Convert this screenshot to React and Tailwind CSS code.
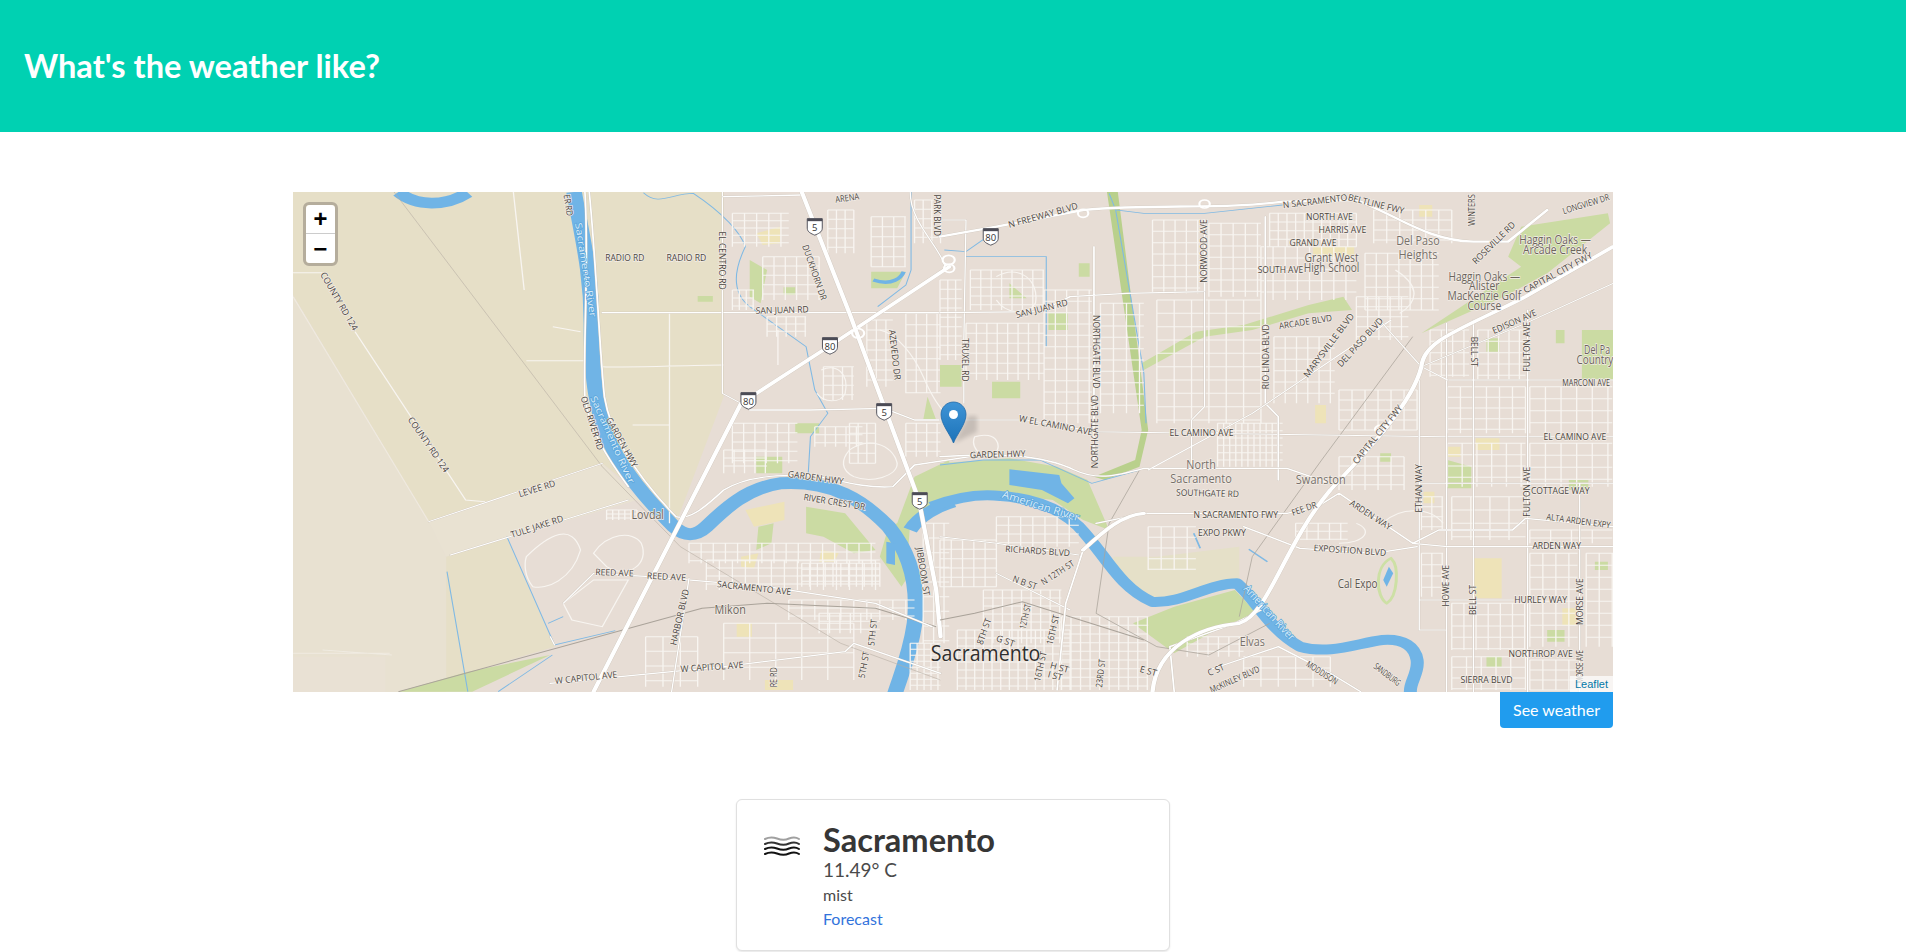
import React from 'react';

const LAND = '#e7ddd5';
const RURAL = '#e6dfc7';
const PALE = '#e8e1d1';
const WATER = '#70b4e6';
const PARK = '#cbdba3';
const SAND = '#eee3b8';

// the map sketch is written in crop units, these bring it to map pixels
const SX = 0.4337;
const SY = 1 / 3;
const LEFT_X = -3;
const RIGHT_X = 647;
const TOP_Y = -2;

// street blocks: x, y, w, h, dx, dy
const streetGrid = ([x, y, w, h, dx, dy]) => {
    let d = '';
    for (let i = x; i <= x + w; i += dx) d += `M${i} ${y}V${y + h}`;
    for (let j = y; j <= y + h; j += dy) d += `M${x} ${j}H${x + w}`;
    return d;
};

const gridsLeft = [
    [1020, 70, 130, 100, 28, 22], [1090, 200, 130, 130, 26, 28], [1020, 300, 50, 60, 16, 24],
    [1240, 60, 60, 130, 20, 28], [1340, 80, 80, 150, 26, 30], [1440, 30, 60, 130, 20, 28],
    [1330, 390, 60, 200, 22, 30], [1420, 370, 80, 240, 24, 34], [1100, 380, 90, 60, 22, 22],
    [1020, 700, 150, 120, 26, 28], [1210, 710, 110, 60, 24, 24], [1000, 780, 100, 70, 24, 24],
    [920, 1060, 430, 60, 28, 26], [960, 1110, 400, 90, 30, 24], [1180, 1120, 180, 70, 18, 18],
    [1150, 1230, 290, 60, 30, 24], [1000, 1300, 300, 170, 60, 44], [1220, 1270, 140, 60, 24, 24],
    [1460, 1000, 60, 360, 24, 44], [1230, 530, 70, 100, 22, 28], [1420, 700, 80, 100, 24, 28],
    [1290, 700, 60, 120, 20, 30], [730, 960, 70, 30, 14, 12], [820, 1340, 120, 150, 40, 44],
    [1430, 1360, 70, 140, 16, 18],
];

const gridsRight = [
    [0, 270, 50, 240, 18, 28], [70, 240, 170, 120, 24, 26], [60, 400, 180, 170, 24, 30],
    [240, 300, 110, 400, 26, 34], [370, 340, 100, 330, 30, 34], [490, 90, 110, 220, 26, 34],
    [620, 100, 120, 220, 28, 34], [760, 70, 200, 100, 20, 26], [740, 170, 220, 160, 28, 34],
    [500, 330, 240, 370, 40, 40], [770, 440, 140, 200, 26, 34], [640, 700, 150, 130, 14, 22],
    [1000, 60, 180, 100, 30, 30], [980, 190, 170, 170, 26, 34], [960, 320, 120, 130, 26, 30],
    [1130, 420, 90, 140, 26, 34], [1240, 420, 110, 150, 24, 34], [1170, 590, 180, 140, 30, 32],
    [1360, 590, 190, 140, 36, 36], [1170, 760, 180, 130, 34, 34], [1360, 760, 190, 130, 36, 36],
    [1110, 920, 50, 100, 24, 30], [1180, 920, 170, 130, 44, 40], [1360, 1020, 190, 40, 48, 24],
    [1110, 1090, 50, 130, 24, 34], [1180, 1240, 170, 140, 28, 34], [1360, 1090, 110, 280, 30, 36],
    [1490, 1090, 70, 280, 30, 36], [1180, 1400, 170, 100, 34, 32], [1360, 1410, 110, 90, 30, 30],
    [0, 1050, 130, 140, 26, 28], [130, 980, 190, 90, 28, 26], [100, 1200, 180, 160, 22, 24],
    [40, 1320, 260, 180, 20, 24], [280, 1280, 200, 220, 22, 26], [480, 1010, 110, 130, 30, 32],
    [820, 1000, 120, 50, 26, 24], [920, 800, 150, 100, 30, 28], [920, 600, 180, 120, 30, 30],
    [570, 1340, 130, 60, 24, 22], [700, 1400, 200, 90, 40, 34],
];

const shields = [
    [LEFT_X, 1210, 110, '5'], [LEFT_X, 1370, 665, '5'], [LEFT_X, 1452, 932, '5'],
    [LEFT_X, 1245, 467, '80'], [LEFT_X, 1057, 632, '80'], [RIGHT_X, 117, 140, '80'],
];

// text, x, y, rotation, width, [size, color]
const labelsLeft = [
    ['COUNTY RD 124', 112, 335, 66, 186], ['COUNTY RD 124', 318, 765, 62, 181],
    ['RADIO RD', 772, 207, 0, 90], ['RADIO RD', 914, 207, 0, 92],
    ['EL CENTRO RD', 995, 212, 90, 175], ['DUCKHORN DR', 1208, 248, 75, 170],
    ['PARK BLVD', 1490, 76, 90, 125], ['SAN JUAN RD', 1135, 362, -2, 122],
    ['AZEVEDO DR', 1393, 495, 85, 150], ['OLD RIVER RD', 695, 700, 76, 165],
    ['GARDEN HWY', 764, 758, 67, 158], ['LEVEE RD', 570, 898, -22, 90],
    ['TULE JAKE RD', 570, 1012, -23, 130], ['GARDEN HWY', 1212, 865, 10, 130],
    ['RIVER CREST DR', 1255, 938, 12, 145], ['JIBBOOM ST', 1458, 1145, 83, 145],
    ['REED AVE', 748, 1150, 3, 88], ['REED AVE', 868, 1162, 4, 90],
    ['SACRAMENTO AVE', 1070, 1196, 8, 172], ['HARBOR BLVD', 900, 1282, -80, 170],
    ['5TH ST', 1345, 1328, -85, 80], ['5TH ST', 1325, 1425, -82, 80],
    ['W CAPITOL AVE', 683, 1465, -8, 145], ['W CAPITOL AVE', 973, 1433, -5, 145],
    ['RE RD', 1118, 1462, -90, 60], ['ARENA', 1285, 26, -10, 55], ['ER RD', 640, 46, 83, 65],
    ['Lovdal', 825, 978, 0, 75, 29, '#6b645c'], ['Mikon', 1015, 1263, 0, 72, 29, '#6b645c'],
    ['Sacramento River', 680, 240, 83, 285, 21, '#d8ebf8'], ['Sacramento River', 742, 750, 71, 275, 21, '#d8ebf8'],
];

const labelsRight = [
    ['N FREEWAY BLVD', 238, 78, -20, 170], ['N SACRAMENTO', 865, 36, -9, 150], ['BELTLINE FWY', 1005, 44, 18, 135],
    ['NORTH AVE', 898, 82, 0, 108], ['HARRIS AVE', 928, 123, 0, 110], ['GRAND AVE', 860, 162, 0, 108],
    ['SOUTH AVE', 785, 243, 0, 105], ['NORWOOD AVE', 610, 183, -90, 190], ['WINTERS', 1227, 60, -90, 95],
    ['ROSEVILLE RD', 1278, 160, -52, 150], ['LONGVIEW DR', 1490, 44, -22, 115],
    ['CAPITAL CITY FWY', 1425, 250, -35, 190], ['EDISON AVE', 1325, 397, -30, 115],
    ['FULTON AVE', 1355, 470, -90, 150], ['BELL ST', 1230, 485, 90, 90], ['MARCONI AVE', 1490, 580, 0, 110],
    ['SAN JUAN RD', 235, 358, -18, 125], ['NORTHGATE BLVD', 358, 485, 90, 220], ['NORTHGATE BLVD', 358, 725, -90, 220],
    ['TRUXEL RD', 57, 510, 90, 130], ['ARCADE BLVD', 843, 398, -12, 125], ['RIO LINDA BLVD', 754, 500, -90, 195],
    ['MARYSVILLE BLVD', 898, 467, -60, 215], ['DEL PASO BLVD', 970, 458, -55, 170],
    ['W EL CAMINO AVE', 267, 708, 14, 175], ['EL CAMINO AVE', 603, 732, 0, 148], ['EL CAMINO AVE', 1464, 744, 0, 145],
    ['GARDEN HWY', 133, 795, -2, 128], ['SOUTHGATE RD', 617, 912, 2, 145], ['N SACRAMENTO FWY', 682, 976, 0, 195],
    ['FEE DR', 840, 958, -25, 62], ['EXPO PKWY', 650, 1030, 0, 110], ['ARDEN WAY', 992, 977, 40, 120],
    ['CAPITAL CITY FWY', 1010, 735, -58, 200], ['ETHAN WAY', 1105, 895, -90, 145], ['COTTAGE WAY', 1430, 906, 0, 135],
    ['FULTON AVE', 1355, 905, -90, 150], ['ALTA ARDEN EXPY', 1472, 995, 10, 150], ['ARDEN WAY', 1422, 1071, 0, 112],
    ['EXPOSITION BLVD', 945, 1083, 5, 168], ['RICHARDS BLVD', 225, 1085, 5, 150], ['N B ST', 195, 1180, 25, 60],
    ['N 12TH ST', 272, 1150, -40, 95], ['HOWE AVE', 1168, 1187, -90, 125], ['BELL ST', 1230, 1230, -90, 90],
    ['HURLEY WAY', 1385, 1232, 0, 122], ['MORSE AVE', 1478, 1235, -90, 140], ['8TH ST', 103, 1325, -75, 80],
    ['G ST', 150, 1355, 25, 45], ['12TH ST', 198, 1280, -80, 75], ['16TH ST', 262, 1320, -80, 90],
    ['H ST', 275, 1435, 20, 45], ['I ST', 265, 1460, 20, 35], ['16TH ST', 233, 1430, -80, 90], ['23RD ST', 372, 1450, -85, 85],
    ['E ST', 480, 1445, 20, 40], ['C ST', 637, 1442, -30, 42], ['MODDISON', 880, 1450, 40, 90], ['SANDBURG', 1030, 1455, 45, 80],
    ['NORTHROP AVE', 1385, 1395, 0, 148], ['SIERRA BLVD', 1260, 1473, 0, 120], ['MORSE AVE', 1478, 1430, -90, 100],
    ['McKINLEY BLVD', 680, 1470, -30, 130],
    ['Grant West', 903, 207, 0, 125, 27, '#6b645c'], ['High School', 903, 237, 0, 128, 27, '#6b645c'],
    ['Del Paso', 1102, 156, 0, 100, 29, '#77706a'], ['Heights', 1102, 196, 0, 90, 29, '#77706a'],
    ['Haggin Oaks —', 1418, 152, 0, 165, 27, '#6b645c'], ['Arcade Creek', 1418, 181, 0, 148, 27, '#6b645c'],
    ['Haggin Oaks —', 1255, 262, 0, 165, 27, '#6b645c'], ['Alister', 1255, 291, 0, 70, 27, '#6b645c'],
    ['MacKenzie Golf', 1255, 320, 0, 170, 27, '#6b645c'], ['Course', 1255, 350, 0, 78, 27, '#6b645c'],
    ['Del Pa', 1515, 482, 0, 60, 26, '#6b645c'], ['Country', 1510, 512, 0, 85, 26, '#6b645c'],
    ['North', 602, 828, 0, 68, 29, '#77706a'], ['Sacramento', 602, 868, 0, 142, 29, '#77706a'],
    ['Swanston', 878, 872, 0, 115, 29, '#77706a'], ['Cal Expo', 963, 1185, 0, 92, 26, '#5d5750'],
    ['Elvas', 720, 1357, 0, 58, 28, '#77706a'], ['Sacramento', 105, 1395, 0, 253, 50, '#2f2f2f'],
    ['American River', 232, 950, 22, 190, 24, '#d8ebf8'], ['American River', 758, 1270, 55, 190, 24, '#d8ebf8'],
];

// labels are set in map pixels, so the letters keep their shape
const MapLabel = ({ item, originX }) => {
    const [text, x, y, rot, width, size = 20, color = '#4b4641'] = item;
    const water = color === '#d8ebf8';
    const rad = (rot * Math.PI) / 180;
    const vx = Math.cos(rad) * SX;
    const vy = Math.sin(rad) * SY;
    const angle = (Math.atan2(vy, vx) * 180) / Math.PI;
    const px = originX + x * SX;
    const py = TOP_Y + y * SY;
    return (
        <text
            x={px}
            y={py}
            textAnchor="middle"
            dominantBaseline="middle"
            textLength={width * Math.hypot(vx, vy)}
            lengthAdjust="spacingAndGlyphs"
            transform={`rotate(${angle} ${px} ${py})`}
            fontSize={size * 0.45}
            fontFamily="'Open Sans', sans-serif"
            fill={color}
            stroke={water ? '#5aa5dc' : '#f3ede7'}
            strokeWidth="1.4"
            paintOrder="stroke"
        >
            {text}
        </text>
    );
};

const Shield = ({ item }) => {
    const [originX, x, y, text] = item;
    return (
        <g transform={`translate(${originX + x * SX} ${TOP_Y + y * SY})`}>
            <path d="M-7.5 -8H7.5V1.5C7.5 5.5 3.5 7 0 8.5C-3.5 7 -7.5 5.5 -7.5 1.5Z" fill="#ffffff" stroke="#55555e" strokeWidth="1" />
            <path d="M-7.5 -8H7.5V-5.5H-7.5Z" fill="#4b4b55" />
            <text y="1.5" textAnchor="middle" dominantBaseline="middle" fontSize="9.5" fontFamily="'Open Sans', sans-serif" fill="#333">{text}</text>
        </g>
    );
};

const Road = ({ d, w = 5 }) => (
    <g fill="none" strokeLinecap="round" strokeLinejoin="round">
        <path d={d} stroke="#cbc2b8" strokeWidth={w + 1.5} />
        <path d={d} stroke="#ffffff" strokeWidth={w} />
    </g>
);

const LeftMap = () => (
    <g transform={`translate(${LEFT_X} ${TOP_Y}) scale(${SX} ${SY})`}>
        <path d="M0 0H1000V620L890 1000L720 820L320 995L0 300Z" fill={RURAL} />
        <path d="M0 300L320 995L360 1100L360 1520H0Z" fill={PALE} />
        <path d="M320 995L720 820L860 1000L800 930L500 1045L360 1100Z" fill="#e9e2d2" />
        <path d="M360 1100L500 1045L610 1370L250 1510H360Z" fill={RURAL} />
        <path d="M0 1400H220V1520H0Z" fill="#e9e1d4" />

        <path d="M250 1505L410 1445L600 1395L420 1505Z" fill={PARK} />
        <path d="M1060 210L1100 240L1085 340L1060 320Z M1340 245H1420L1400 295H1340Z M1165 700H1220V730H1165Z M1075 800H1135V850H1075Z M1470 620L1490 690H1460Z" fill={PARK} />
        <path d="M1190 950L1280 970L1350 1080L1300 1090L1230 1040L1190 1030Z M1080 1010L1115 1000L1110 1060L1075 1080Z M940 318H975V335H940Z M1138 292H1165V314H1138Z" fill={PARK} />
        <path d="M1400 1000L1440 860L1520 810L1520 920L1430 1000L1420 1170L1410 1190L1360 1100L1380 1010Z" fill={PARK} />
        <path d="M1050 960L1140 935L1140 990L1070 1010Z M1040 1100L1080 1090L1070 1135L1040 1130Z M1225 1080L1265 1090L1255 1115L1220 1115Z M1030 1300H1065V1340H1030Z M1095 1470H1160V1500H1095Z M1075 130L1130 110L1130 160L1090 165Z" fill={SAND} />

        <path d="M655 6C675 150 695 250 695 400C695 560 705 680 750 790C790 880 840 950 885 1010C910 1040 935 1040 960 1010C1000 960 1050 895 1130 880C1250 870 1320 930 1380 1010C1430 1090 1450 1190 1440 1300C1430 1390 1410 1450 1395 1510" fill="none" stroke={WATER} strokeWidth="36" />
        <path d="M250 6C290 50 360 50 410 8" fill="none" stroke={WATER} strokeWidth="32" />
        <path d="M1430 1020C1450 980 1490 950 1530 935" fill="none" stroke={WATER} strokeWidth="34" />
        <path d="M1375 1055L1395 1060L1395 1125L1375 1120Z" fill={WATER} />
        <path d="M1345 270C1390 290 1410 260 1415 245" fill="none" stroke={WATER} strokeWidth="10" />
        <g fill="none" stroke="#7fb9e4" strokeWidth="2.5">
            <path d="M815 8C850 50 880 10 930 10C1000 70 1040 130 1050 170C1020 250 1020 310 1060 350L1190 470L1210 600L1240 670L1200 740L1195 850" />
            <path d="M500 1040L610 1365L750 1322M595 1300L630 1280M362 1145L410 1505M480 1505L605 1395" />
            <path d="M1355 350L1420 285L1432 240V6" />
        </g>

        <g fill="none" stroke="#f8f5f1" strokeWidth="3">
            {gridsLeft.map((g, i) => <path key={i} d={streetGrid(g)} />)}
            <path d="M545 512L680 512M720 530C800 535 900 525 1000 525M875 370V1000M790 705H875M606 410L670 425M1125 420V525M515 6L540 300" />
            <path d="M7 248H75M150 425L405 930L450 935" />
            <path d="M7 320L320 995" strokeOpacity="0.45" />
            <path d="M545 1100C600 1030 650 1000 670 1080C650 1170 590 1200 560 1190C540 1160 540 1120 545 1100Z" />
            <path d="M700 1090C730 1030 790 1020 810 1060C830 1120 780 1170 730 1130Z" />
            <path d="M630 1240L700 1170L780 1170L720 1310L650 1290Z" />
            <path d="M7 1390H230M75 1380L235 1395" strokeOpacity="0.5" />
            <path d="M1290 780C1330 740 1390 760 1400 820C1400 860 1340 880 1300 860C1270 840 1270 810 1290 780Z" />
            <path d="M1225 540C1260 520 1290 550 1280 610C1270 640 1230 640 1215 610" />
            <path d="M1360 420C1400 430 1440 500 1460 560C1480 620 1500 660 1520 680" />
        </g>
        <path d="M240 6L720 830L900 1070L1270 1360L1500 1470" fill="none" stroke="#b5ada3" strokeWidth="1.5" />
        <path d="M250 1505L950 1255L1100 1240L1350 1255L1490 1310" fill="none" stroke="#aaa39a" strokeWidth="3" />
        <Road d="M320 995L720 820" w={3} />
        <Road d="M370 1095L780 930" w={3} />
        <Road d="M680 6C690 200 675 500 680 620C690 720 730 800 780 890M690 6C705 200 715 500 725 620C740 740 800 860 890 980C920 990 950 960 1000 900C1050 860 1130 850 1220 860C1290 880 1340 895 1390 890L1440 825L1568 800" w={4} />
        <Road d="M720 368H1500" w={4} />
        <Road d="M997 6V610L1040 640" w={3} />
        <Road d="M1000 20L1180 15" w={4} />
        <Road d="M1430 6C1430 100 1500 170 1510 230" w={3} />
        <Road d="M1060 660H1200L1370 655L1440 690H1500" w={4} />
        <Road d="M700 1150L830 1160L1100 1190L1350 1240L1480 1310" w={4} />
        <Road d="M600 1480L1000 1430L1280 1385L1300 1360L1500 1450" w={4} />
        <Road d="M630 1240L700 1150M920 1165L880 1505M610 1365L600 1340" w={3} />
        <Road d="M700 1505L1040 640L1245 467L1520 230" w={10} />
        <Road d="M1180 6L1290 370L1450 930L1490 1200L1500 1340" w={10} />
        <g fill="none" stroke="#fff" strokeWidth="5">
            <circle cx="1310" cy="430" r="14" />
            <circle cx="1520" cy="235" r="12" />
        </g>
    </g>
);

const RightMap = () => (
    <g transform={`translate(${RIGHT_X} ${TOP_Y}) scale(${SX} ${SY})`}>
        <path d="M0 820L160 805L270 830L340 870L390 1020L330 990L260 930L100 905L0 930Z" fill={PARK} />
        <path d="M385 6H410L480 720L460 830L380 870L355 860L450 810L465 720Z" fill="#b9d08c" />
        <path d="M465 520L590 425L700 405L850 345L930 320L950 360L850 370L720 420L610 440L470 540Z" fill={PARK} />
        <path d="M1110 430L1340 230L1310 200L1340 110L1540 70L1545 100L1400 250L1300 320Z" fill={PARK} />
        <path d="M540 1250L680 1200L730 1270L650 1310L540 1390L445 1300Z" fill={PARK} />
        <path d="M1480 420H1552V570H1480Z M1170 810L1225 830V895H1170Z M0 525H50V590H0Z M120 575H185V625H120Z M160 280L200 325H160Z M250 370H295V420H250Z M1260 445H1290V485H1260Z M1420 420H1440V460H1420Z M320 220H345V260H320Z M1015 790H1040V815H1015Z M1450 870H1495V900H1450Z M1400 1320H1440V1355H1400Z M1510 1115H1540V1140H1510Z M1260 1400H1295V1430H1260Z" fill={PARK} />
        <path d="M860 170H955V200H860Z M1230 1105H1295V1225H1230Z M865 645H890V700H865Z M1435 1255H1470V1305H1435Z M1235 745H1290V780H1235Z M1115 905H1140V940H1115Z M1105 45H1135V80H1105Z M1170 770H1200V800H1170Z" fill={SAND} />
        <path d="M400 1100L500 1100L690 1070L690 1170L540 1240L480 1240L400 1160Z" fill="#e5e0c8" />
        <path d="M1040 1105C1060 1130 1055 1220 1030 1240C1005 1220 1000 1130 1040 1105Z" fill="none" stroke="#cde0a5" strokeWidth="7" />
        <path d="M1035 1130L1045 1150L1030 1190L1022 1170Z" fill={WATER} />

        <path d="M160 838L275 855L280 880L310 925L295 940L235 900L160 885Z" fill={WATER} />
        <path d="M-20 950C40 920 90 910 140 918C220 925 280 960 320 1010C380 1090 410 1190 490 1236C560 1240 620 1180 685 1180C730 1230 760 1320 830 1370C900 1395 960 1360 1020 1350C1070 1345 1095 1370 1100 1410C1105 1450 1080 1480 1085 1510" fill="none" stroke={WATER} strokeWidth="30" strokeLinejoin="round" />
        <g fill="none" stroke="#7fb9e4" strokeWidth="2.5">
            <path d="M60 200H245V470M390 10L405 60L470 70L610 70L790 45M405 60L470 550L475 700M0 825L100 810L230 810L350 880L460 840" />
            <path d="M585 1030L600 1075M712 1078L755 1115" strokeWidth="4" />
            <path d="M10 180L60 185L120 130" />
        </g>

        <g fill="none" stroke="#f8f5f1" strokeWidth="3">
            {gridsRight.map((g, i) => <path key={i} d={streetGrid(g)} />)}
            <path d="M130 260C180 220 230 270 220 340C200 380 150 370 130 330M80 740C130 720 150 770 120 800C90 800 70 770 80 740" />
            <path d="M1050 240C1100 280 1110 330 1060 370M1020 1000C1060 950 1130 950 1160 1000M960 1000C1000 1020 980 1060 920 1060" />
        </g>
        <path d="M1090 440L880 810L720 1100L690 1280M460 840L390 1000L360 1270L500 1370L620 1395L760 1300" fill="none" stroke="#aaa39a" strokeWidth="2" />
        <path d="M0 1290L80 1270L190 1235L470 1350" fill="none" stroke="#aaa39a" strokeWidth="3" />
        <Road d="M0 90L60 90L55 450V640M0 690H200L360 725L1160 740H1552" w={3} />
        <Road d="M0 368L230 365L300 320L430 310L610 305V90M355 170V830M750 80V640L780 680V870" w={4} />
        <Road d="M0 800C120 790 230 790 310 840C360 870 400 860 470 835H800L900 880" w={4} />
        <Road d="M610 305V650L580 690V830M480 840L720 670L1040 390" w={3} />
        <Road d="M1170 570H1552M1105 880H1552M1105 570V1230H1350M1168 400V1505M1230 390V1505M1355 360V1505M1475 880V1505M1105 1230V1320H1165" w={3} />
        <Road d="M360 1000L470 970H800L870 950L920 910L1090 1060L1170 1070H1552M700 1010L830 1075L1000 1090L1100 1070M1090 1060L1150 1020H1320L1350 985L1552 1010" w={4} />
        <Road d="M0 1040L130 1060L320 1095M130 1150L300 1260M1020 400L1110 530L1170 570M1110 530L1350 400L1552 280" w={3} />
        <Road d="M330 1080L290 1240L270 1500M540 1505L530 1370L680 1300L740 1260M620 1440L780 1370L900 1450L970 1505" w={4} />
        <Road d="M0 140L130 110L330 60C500 40 640 60 790 35L960 30C1060 80 1120 150 1230 155H1310L1400 60" w={7} />
        <Road d="M330 1080C380 1020 420 975 470 970M490 1505C500 1370 600 1310 690 1300C760 1270 790 1070 900 900C980 790 1090 640 1110 530C1115 450 1200 420 1350 320L1552 170" w={10} />
        <g fill="none" stroke="#fff" strokeWidth="5">
            <circle cx="610" cy="42" r="12" />
            <circle cx="330" cy="70" r="12" />
            <circle cx="20" cy="210" r="14" />
            <circle cx="1015" cy="718" r="12" />
        </g>
    </g>
);

const MapPin = () => (
    <g transform="translate(648 210)">
        <path d="M13 41L27 14H36L36 30Z" fill="#000" opacity="0.14" filter="url(#pinShadow)" />
        <path d="M12.5 41C9 32 0 22 0 12.5C0 5.5 5.6 0 12.5 0C19.4 0 25 5.5 25 12.5C25 22 16 32 12.5 41Z" fill="url(#pinBlue)" stroke="#1f6aa8" strokeWidth="0.8" />
        <circle cx="12.5" cy="12.5" r="4.5" fill="#fff" />
    </g>
);

const WeatherMap = () => (
    <svg viewBox="0 0 1320 500" width="1320" height="500" className="block">
        <defs>
            <linearGradient id="pinBlue" x1="0" y1="0" x2="0" y2="1">
                <stop offset="0" stopColor="#3f94d6" />
                <stop offset="1" stopColor="#1c73b9" />
            </linearGradient>
            <filter id="pinShadow">
                <feGaussianBlur stdDeviation="2" />
            </filter>
        </defs>
        <rect width="1320" height="500" fill={LAND} />
        <LeftMap />
        <RightMap />
        {shields.map((s, i) => <Shield key={i} item={s} />)}
        {labelsLeft.map((l, i) => <MapLabel key={i} item={l} originX={LEFT_X} />)}
        {labelsRight.map((l, i) => <MapLabel key={i} item={l} originX={RIGHT_X} />)}
        <MapPin />
    </svg>
);

const MistIcon = () => (
    <svg width="36" height="22" viewBox="0 0 36 22" fill="none" strokeWidth="2" strokeLinecap="round">
        <path d="M1 3C5 1 9 1 13 2.5C18 4.5 21 4.5 25 2.5C29 1 32 1 35 3" stroke="#a0a0a0" />
        <path d="M1 8C5 6 9 6 13 7.5C18 9.5 21 9.5 25 7.5C29 6 32 6 35 8" stroke="#333" />
        <path d="M1 13C5 11 9 11 13 12.5C18 14.5 21 14.5 25 12.5C29 11 32 11 35 13" stroke="#111" />
        <path d="M1 18C5 16 9 16 13 17.5C18 19.5 21 19.5 25 17.5C29 16 32 16 35 18" stroke="#111" />
    </svg>
);

const App = () => {
    return (
        <div className="min-h-[952px] bg-white font-['Lato','Noto_Sans',sans-serif] text-[#4a4a4a]">
            <section className="bg-[#00d1b2] px-6 py-12">
                <h1 className="text-[32.6px] leading-9 font-bold text-white">What's the weather like?</h1>
            </section>

            <main className="w-[1320px] mx-auto mt-[60px]">
                <div className="relative h-[500px] overflow-hidden">
                    <WeatherMap />
                    <div className="absolute left-[10px] top-[10px] flex flex-col rounded-md border-[3px] border-[#b5ad9c] font-['Liberation_Mono',monospace] text-[24px] font-bold text-black">
                        <div className="flex h-[29px] w-[29px] items-center justify-center rounded-t-sm border-b border-[#ccc] bg-white pt-1">+</div>
                        <div className="flex h-[29px] w-[29px] items-center justify-center rounded-b-sm bg-white pt-1">−</div>
                    </div>
                    <div className="absolute right-0 bottom-0 bg-white/70 px-[5px] font-['Liberation_Sans',sans-serif] text-[11px] leading-4 text-[#0078a8]">Leaflet</div>
                </div>

                <div className="flex justify-end">
                    <button className="h-9 rounded-b-sm rounded-t-none bg-[#209cee] px-[13px] text-base text-white">See weather</button>
                </div>

                <div className="mx-auto mt-[71px] flex h-[152px] w-[434px] rounded-md border border-[#e0e0e0] bg-white pt-[22px] pl-[27px] shadow-[0_1px_2px_rgba(10,10,10,0.1)]">
                    <div className="mt-[14px] mr-[23px] h-[22px] w-[36px] shrink-0">
                        <MistIcon />
                    </div>
                    <div>
                        <p className="text-[32.6px] leading-[36px] font-bold text-[#363636]">Sacramento</p>
                        <p className="text-[19px] leading-[24px]">11.49° C</p>
                        <p className="mt-[1px] leading-6">mist</p>
                        <a className="leading-6 text-[#3273dc]">Forecast</a>
                    </div>
                </div>
            </main>
        </div>
    );
};

export default App;
